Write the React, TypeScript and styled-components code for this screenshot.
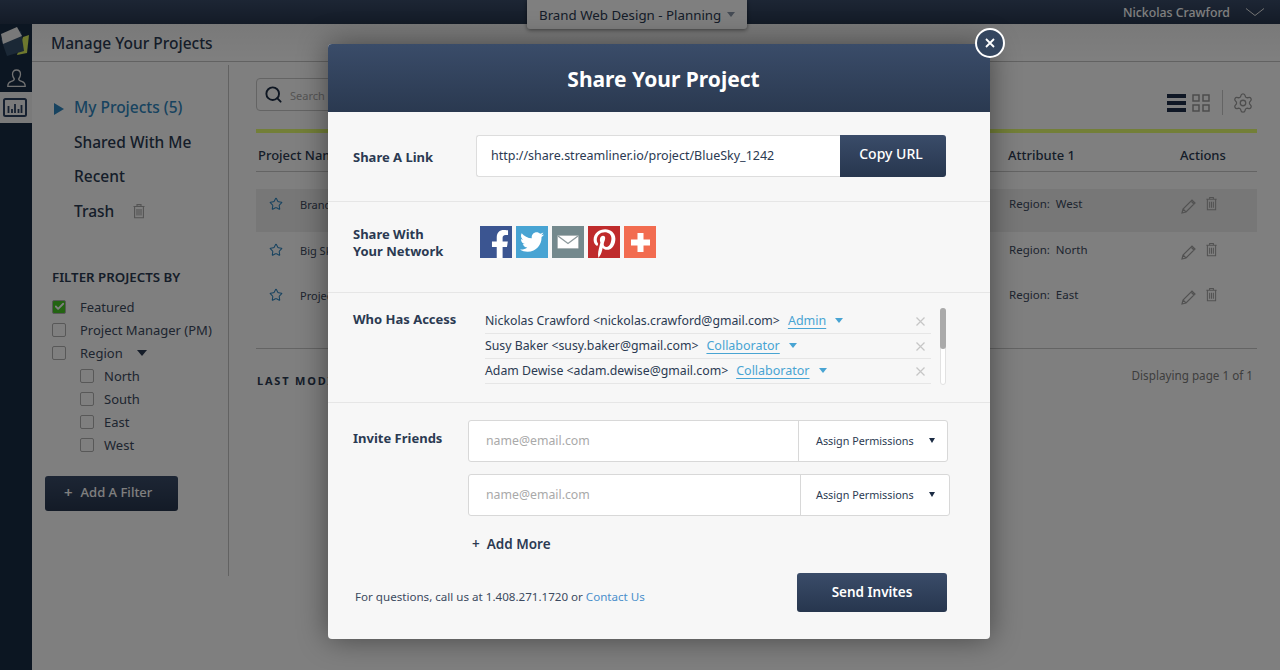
import React from "react";
import styled, { createGlobalStyle } from "styled-components";
import { FaFacebookF, FaTwitter, FaPinterestP } from "react-icons/fa";
import { Settings, Star, Search, Check } from "lucide-react";

const FONT = `"Noto Sans", "Open Sans", sans-serif`;

const GlobalStyle = createGlobalStyle`
  html, body { margin: 0; padding: 0; height: 100%; overflow: hidden; }
  body { background: #fff; font-family: ${FONT}; color: #2b3a52; }
  * { box-sizing: border-box; }
`;

const filters = ["North", "South", "East", "West"];
const rows = [
  { name: "Brand Web Design", region: "West", active: true },
  { name: "Big Sky Launch", region: "North", active: false },
  { name: "Project Bluebird", region: "East", active: false },
];
const people = [
  { who: "Nickolas Crawford <nickolas.crawford@gmail.com>", role: "Admin" },
  { who: "Susy Baker <susy.baker@gmail.com>", role: "Collaborator" },
  { who: "Adam Dewise <adam.dewise@gmail.com>", role: "Collaborator" },
];

const TrashIcon: React.FC<{ size?: number }> = ({ size = 16 }) => (
  <svg width={size} height={size} viewBox="0 0 16 16" fill="none" stroke="currentColor" strokeWidth="1.1">
    <path d="M2.5 3.5h11M6 3.3V1.6h4v1.7M3.6 3.7v11h8.8v-11" />
    <path d="M6 6v6.5M8 6v6.5M10 6v6.5" />
  </svg>
);

const App: React.FC = () => (
  <Page>
    <GlobalStyle />
    <TopBar>
      <ProjectPicker>
        Brand Web Design - Planning <PickerCaret />
      </ProjectPicker>
      <UserName>Nickolas Crawford</UserName>
      <svg width="20" height="10" viewBox="0 0 20 10" fill="none" stroke="#e8e8e8" strokeWidth="1">
        <path d="M1 1.5l9 7 9-7" />
      </svg>
    </TopBar>
    <Body>
      <Rail>
        <LogoSlot>
          <svg width="32" height="37" viewBox="0 0 32 37">
            <path d="M23 13l6-2-2 18-10 2z" fill="#dcf05c" />
            <path d="M1 15L21 7l3 20-17 5z" fill="#36506c" />
            <path d="M1 10l16-7 5 9-19 8z" fill="#f2f2f2" />
          </svg>
        </LogoSlot>
        <RailButton>
          <svg width="19" height="18" viewBox="0 0 19 18" fill="none" stroke="#e4e4e4" strokeWidth="1.3">
            <path d="M9.5 1c2.600 0 4 1.800 4 4.300 0 2.200-1 3.700-1.800 4.700 0 1.400 1 1.800 3 2.400 2 .7 3.500 1.400 3.500 4.900H.8c0-3.500 1.500-4.200 3.500-4.900 2-.6 3-1 3-2.400-.8-1-1.800-2.500-1.800-4.700 0-2.500 1.400-4.300 4-4.300z" />
          </svg>
        </RailButton>
        <RailButton $active>
          <svg width="24" height="19" viewBox="0 0 24 19" fill="none" stroke="#2b4160">
            <rect x="1" y="1" width="22" height="17" rx="1.500" strokeWidth="2" />
            <path d="M5.500 8v7M9 11v4M12 6v9M15.500 11v4M18.500 7v8" strokeWidth="1.800" />
          </svg>
        </RailButton>
      </Rail>
      <Main>
        <SubHeader>Manage Your Projects</SubHeader>
        <Columns>
          <Sidebar>
            <NavList>
              <NavItem $active>
                <NavCaret />
                My Projects (5)
              </NavItem>
              <NavItem>Shared With Me</NavItem>
              <NavItem>Recent</NavItem>
              <NavItem>
                Trash
                <NavTrash>
                  <TrashIcon size={16} />
                </NavTrash>
              </NavItem>
            </NavList>
            <FilterTitle>FILTER PROJECTS BY</FilterTitle>
            <FilterRow>
              <CheckBox $checked>
                <Check size={11} strokeWidth={4} color="#fff" />
              </CheckBox>
              Featured
            </FilterRow>
            <FilterRow>
              <CheckBox />
              Project Manager (PM)
            </FilterRow>
            <FilterRow>
              <CheckBox />
              Region
              <RegionCaret />
            </FilterRow>
            {filters.map((f) => (
              <FilterRow key={f} $nested>
                <CheckBox />
                {f}
              </FilterRow>
            ))}
            <AddFilter>
              <PlusMark>+</PlusMark> Add A Filter
            </AddFilter>
          </Sidebar>
          <Content>
            <Toolbar>
              <SearchBox>
                <Search size={19} color="#1c2c44" strokeWidth={2.4} />
                <SearchHint>Search</SearchHint>
              </SearchBox>
              <ToolIcons>
                <svg width="19" height="18" viewBox="0 0 19 18" fill="#1f2f4a">
                  <path d="M0 0h19v4H0zM0 7h19v4H0zM0 14h19v4H0z" />
                </svg>
                <svg width="18" height="18" viewBox="0 0 18 18" fill="none" stroke="#9a9a9a" strokeWidth="1.500">
                  <path d="M1 1h6v6H1zM11 1h6v6h-6zM1 11h6v6H1zM11 11h6v6h-6z" />
                </svg>
                <ToolDivider />
                <Settings size={22} color="#9c9c9c" strokeWidth={1.4} />
              </ToolIcons>
            </Toolbar>
            <TableHead>
              <HeadCell>Project Name</HeadCell>
              <HeadCell />
              <HeadCell>Attribute 1</HeadCell>
              <HeadCell>Actions</HeadCell>
            </TableHead>
            {rows.map((r) => (
              <TableRow key={r.name} $active={r.active}>
                <NameCell>
                  <Star size={14} color="#2f86c0" strokeWidth={1.8} />
                  <span>{r.name}</span>
                </NameCell>
                <span />
                <RegionCell>Region:&nbsp; {r.region}</RegionCell>
                <ActionCell>
                  <PencilSlot>
                    <svg width="15" height="15" viewBox="0 0 15 15" fill="none" stroke="currentColor" strokeWidth="1.200">
                      <path d="M1 14l1-4L11 1l3 3-9 9zM2 10l3 3M10 2l3 3" />
                    </svg>
                  </PencilSlot>
                  <TrashIcon size={15} />
                </ActionCell>
              </TableRow>
            ))}
            <TableFoot>
              <LastMod>LAST MODIFIED</LastMod>
              <Paging>Displaying page 1 of 1</Paging>
            </TableFoot>
          </Content>
        </Columns>
      </Main>
    </Body>
    <Overlay />
    <Modal>
      <CloseButton>
        <svg width="10" height="10" viewBox="0 0 10 10" stroke="#fff" strokeWidth="1.800">
          <path d="M1 1l8 8M9 1L1 9" />
        </svg>
      </CloseButton>
      <ModalHeader>Share Your Project</ModalHeader>
      <LinkSection>
        <SectionLabel>Share A Link</SectionLabel>
        <UrlField>http://share.streamliner.io/project/BlueSky_1242</UrlField>
        <CopyButton>Copy URL</CopyButton>
      </LinkSection>
      <NetworkSection>
        <SectionLabel>
          Share With
          <br />
          Your Network
        </SectionLabel>
        <SocialRow>
          <SocialTile $bg="#3b5591">
            <FacebookGlyph />
          </SocialTile>
          <SocialTile $bg="#48a4d3">
            <FaTwitter size={24} />
          </SocialTile>
          <SocialTile $bg="#74898d">
            <svg width="22" height="14" viewBox="0 0 22 14">
              <rect x="0.500" y="0.500" width="21" height="13" rx="1" fill="#fff" stroke="#a9b3b5" />
              <path d="M1 1l10 7.500L21 1" fill="none" stroke="#8d9a9d" strokeWidth="1.300" />
            </svg>
          </SocialTile>
          <SocialTile $bg="#bf2b2c">
            <PinterestGlyph />
          </SocialTile>
          <SocialTile $bg="#f26c50">
            <svg width="19" height="19" viewBox="0 0 19 19" fill="#fff">
              <path d="M6.500 0h6v6.500H19v6h-6.500V19h-6v-6.500H0v-6h6.500z" />
            </svg>
          </SocialTile>
        </SocialRow>
      </NetworkSection>
      <AccessSection>
        <SectionLabel>Who Has Access</SectionLabel>
        <AccessList>
          {people.map((p) => (
            <AccessRow key={p.who}>
              <span>{p.who}</span>
              <RoleLink>{p.role}</RoleLink>
              <RoleCaret />
              <RemoveX>
                <svg width="9" height="9" viewBox="0 0 9 9" stroke="#c6c6c6" strokeWidth="1.200">
                  <path d="M0.500 0.500l8 8M8.500 0.500l-8 8" />
                </svg>
              </RemoveX>
            </AccessRow>
          ))}
        </AccessList>
        <ScrollTrack>
          <ScrollThumb />
        </ScrollTrack>
      </AccessSection>
      <InviteSection>
        <InviteTop>
          <SectionLabel>Invite Friends</SectionLabel>
          <InviteFields>
            <InviteField $width={480}>
              <EmailHint>name@email.com</EmailHint>
              <PermissionSelect $indent={17} $end={12}>
                Assign Permissions <DarkCaret />
              </PermissionSelect>
            </InviteField>
            <InviteField $width={482}>
              <EmailHint>name@email.com</EmailHint>
              <PermissionSelect $indent={15} $end={14}>
                Assign Permissions <DarkCaret />
              </PermissionSelect>
            </InviteField>
            <AddMore>
              <span>+</span> Add More
            </AddMore>
          </InviteFields>
        </InviteTop>
        <ModalFoot>
          <FootNote>
            For questions, call us at 1.408.271.1720 or <FootLink>Contact Us</FootLink>
          </FootNote>
          <SendButton>Send Invites</SendButton>
        </ModalFoot>
      </InviteSection>
    </Modal>
  </Page>
);

const FacebookGlyph = styled(FaFacebookF)`
  width: 30px;
  height: 30px;
  margin: 6px -8px 0 0;
`;
const PinterestGlyph = styled(FaPinterestP)`
  width: 27px;
  height: 29px;
  margin-top: 3px;
`;

export default App;

const Page = styled.div`
  position: relative;
  width: 1280px;
  height: 670px;
  overflow: hidden;
  background: #fff;
`;
const TopBar = styled.header`
  position: relative;
  display: flex;
  align-items: center;
  justify-content: flex-end;
  gap: 15px;
  height: 24px;
  padding-right: 15px;
  background: linear-gradient(#3a4c69, #27364e);
`;
const ProjectPicker = styled.div`
  position: absolute;
  top: 0;
  left: 527px;
  z-index: 2;
  display: flex;
  align-items: center;
  gap: 6px;
  width: 220px;
  height: 29px;
  padding: 0 0 0 12px;
  background: #fff;
  border-radius: 0 0 3px 3px;
  box-shadow: 0 1px 4px rgba(0, 0, 0, 0.5);
  font-size: 13.300px;
  color: #2b3a52;
`;
const PickerCaret = styled.i`
  border: 4px solid transparent;
  border-top: 5px solid #8a96a8;
  border-bottom: 0;
`;
const UserName = styled.div`
  font-size: 12.300px;
  font-weight: 500;
  color: #fff;
`;
const Body = styled.div`
  display: flex;
  height: 646px;
`;
const Rail = styled.nav`
  display: flex;
  flex-direction: column;
  width: 32px;
  background: #182c44;
`;
const LogoSlot = styled.div`
  height: 37px;
  overflow: hidden;
`;
const RailButton = styled.div<{ $active?: boolean }>`
  display: flex;
  align-items: center;
  justify-content: ${(p) => (p.$active ? "flex-start" : "center")};
  flex: none;
  width: ${(p) => (p.$active ? "34px" : "32px")};
  height: 31px;
  padding: ${(p) => (p.$active ? "0 0 0 3px" : "3px 0 0")};
  background: ${(p) => (p.$active ? "#f4f4f4" : "transparent")};
  border-radius: 0 2px 2px 0;
`;
const Main = styled.main`
  flex: 1;
  display: flex;
  flex-direction: column;
`;
const SubHeader = styled.div`
  display: flex;
  align-items: center;
  height: 38px;
  padding: 0 0 0 19px;
  background: linear-gradient(#f3f3f3, #fff);
  border-bottom: 1px solid #c4c4c4;
  font-size: 15.500px;
  font-weight: 500;
  color: #2b3a52;
`;
const Columns = styled.div`
  display: flex;
  flex: 1;
  background: #fff;
`;
const Sidebar = styled.aside`
  width: 197px;
  height: 511px;
  margin-top: 3px;
  border-right: 1px solid #c4c4c4;
  padding: 25px 0 0 20px;
`;
const NavList = styled.ul`
  list-style: none;
  margin: 0 0 40px;
  padding: 0;
`;
const NavItem = styled.li<{ $active?: boolean }>`
  position: relative;
  display: flex;
  align-items: center;
  height: 34.500px;
  padding-left: 22px;
  font-size: 15.500px;
  font-weight: 500;
  color: ${(p) => (p.$active ? "#2f86c0" : "#2b3a52")};
`;
const NavCaret = styled.i`
  position: absolute;
  left: 2px;
  top: 13px;
  border: 6px solid transparent;
  border-left: 10px solid #2f86c0;
  border-right: 0;
`;
const NavTrash = styled.span`
  display: inline-flex;
  margin-left: 17px;
  color: #a8a8a8;
`;
const FilterTitle = styled.h3`
  margin: 0 0 9px;
  font-size: 13.300px;
  font-weight: 600;
  color: #2b3a52;
`;
const FilterRow = styled.div<{ $nested?: boolean }>`
  display: flex;
  align-items: center;
  gap: ${(p) => (p.$nested ? "10px" : "14px")};
  height: 23px;
  padding-left: ${(p) => (p.$nested ? "28px" : "0")};
  font-size: 13px;
  color: #3c4a60;
`;
const CheckBox = styled.span<{ $checked?: boolean }>`
  display: inline-flex;
  align-items: center;
  justify-content: center;
  flex: none;
  width: 14px;
  height: 14px;
  border: 1px solid #b0b0b0;
  border-radius: 2px;
  background: ${(p) => (p.$checked ? "#46c825" : "#fff")};
`;
const RegionCaret = styled.i`
  border: 5px solid transparent;
  border-top: 6px solid #2b3a52;
  border-bottom: 0;
`;
const AddFilter = styled.button`
  display: flex;
  align-items: center;
  gap: 8px;
  width: 133px;
  height: 35px;
  margin: 20px 0 0 -7px;
  padding: 0 0 3px 19px;
  border: 0;
  border-radius: 3px;
  background: linear-gradient(#3a4c69, #27364e);
  color: #fff;
  font-family: ${FONT};
  font-size: 13px;
  font-weight: 500;
`;
const PlusMark = styled.span`
  font-size: 15px;
  font-weight: 600;
`;
const Content = styled.section`
  flex: 1;
  padding: 17px 23px 0 27px;
`;
const Toolbar = styled.div`
  display: flex;
  align-items: flex-end;
  justify-content: space-between;
  height: 54px;
  padding-bottom: 18px;
  border-bottom: 4px solid #e6ff70;
`;
const SearchBox = styled.div`
  display: flex;
  align-items: center;
  gap: 7px;
  width: 300px;
  height: 33px;
  padding-left: 7px;
  border: 1px solid #c8c8c8;
  border-radius: 4px;
`;
const SearchHint = styled.span`
  padding-top: 1px;
  font-size: 11px;
  color: #aaa;
`;
const ToolIcons = styled.div`
  display: flex;
  align-items: center;
  gap: 6px;
  margin: 0 3px -4px 0;
`;
const ToolDivider = styled.i`
  width: 1px;
  height: 25px;
  margin: 0 3px 0 6px;
  background: #c8c8c8;
`;
const TableHead = styled.div`
  display: grid;
  grid-template-columns: 400px 350px 172px 1fr;
  align-items: center;
  height: 39px;
  padding: 5px 0 0 2px;
  border-bottom: 1px solid #c8c8c8;
`;
const HeadCell = styled.div`
  font-size: 13px;
  font-weight: 500;
  color: #2b3a52;
`;
const TableRow = styled.div<{ $active?: boolean }>`
  display: grid;
  grid-template-columns: 402px 351px 171px 1fr;
  height: 43px;
  margin-top: ${(p) => (p.$active ? "17px" : "2.500px")};
  padding-top: 7px;
  background: ${(p) => (p.$active ? "#eee" : "transparent")};
`;
const NameCell = styled.div`
  display: flex;
  align-items: flex-start;
  gap: 17px;
  padding: 1px 0 0 13px;
  font-size: 11px;
  color: #3c4a60;
`;
const RegionCell = styled.div`
  font-size: 11.500px;
  color: #3c4a60;
`;
const ActionCell = styled.div`
  display: flex;
  gap: 8px;
  padding-left: 1px;
  color: #a4a4a4;
`;
const PencilSlot = styled.span`
  display: flex;
  margin-top: 3px;
`;
const TableFoot = styled.div`
  display: flex;
  justify-content: space-between;
  margin-top: 25px;
  padding: 18px 4px 0 1px;
  border-top: 1px solid #c8c8c8;
`;
const LastMod = styled.span`
  margin-top: 6px;
  font-size: 11px;
  font-weight: 700;
  letter-spacing: 1.800px;
  color: #2b3a52;
`;
const Paging = styled.span`
  font-size: 11.700px;
  color: #7d7d7d;
`;
const Overlay = styled.div`
  position: absolute;
  inset: 0;
  z-index: 5;
  background: rgba(0, 0, 0, 0.5);
`;
const Modal = styled.div`
  position: absolute;
  top: 44px;
  left: 328px;
  z-index: 6;
  display: flex;
  flex-direction: column;
  width: 662px;
  height: 595px;
  background: #f7f7f7;
  border-radius: 4px;
  box-shadow: 0 0 30px rgba(0, 0, 0, 0.45);
`;
const CloseButton = styled.div`
  position: absolute;
  top: -16px;
  right: -15px;
  display: flex;
  align-items: center;
  justify-content: center;
  width: 30px;
  height: 30px;
  border: 2px solid #fff;
  border-radius: 50%;
  background: #34465f;
`;
const ModalHeader = styled.h1`
  display: flex;
  align-items: center;
  justify-content: center;
  height: 68px;
  margin: 0;
  padding: 2px 0 0 9px;
  border-radius: 4px 4px 0 0;
  background: linear-gradient(#3a4c69, #2a3950);
  font-size: 21px;
  font-weight: 700;
  color: #fff;
`;
const SectionLabel = styled.div`
  font-size: 13px;
  font-weight: 700;
  line-height: 17px;
  color: #2b3a52;
`;
const LinkSection = styled.section`
  display: flex;
  align-items: center;
  height: 90px;
  padding: 0 0 1px 25px;
  border-bottom: 1px solid #e6e6e6;
  ${SectionLabel} {
    width: 123px;
    padding-top: 2px;
  }
`;
const UrlField = styled.div`
  display: flex;
  align-items: center;
  width: 364px;
  height: 42px;
  padding: 0 0 1px 14px;
  background: #fff;
  border: 1px solid #ddd;
  border-right: 0;
  border-radius: 3px 0 0 3px;
  font-size: 12.500px;
  color: #2b3a52;
`;
const CopyButton = styled.button`
  width: 106px;
  height: 42px;
  padding: 0 4px 5px 0;
  border: 0;
  border-radius: 0 3px 3px 0;
  background: linear-gradient(#3a4c69, #27364e);
  color: #fff;
  font-family: ${FONT};
  font-size: 14px;
  font-weight: 500;
`;
const NetworkSection = styled.section`
  display: flex;
  height: 91px;
  padding: 24px 0 0 25px;
  border-bottom: 1px solid #e6e6e6;
  ${SectionLabel} {
    width: 127px;
  }
`;
const SocialRow = styled.div`
  display: flex;
  gap: 4px;
`;
const SocialTile = styled.div<{ $bg: string }>`
  display: flex;
  align-items: center;
  justify-content: center;
  overflow: hidden;
  width: 32px;
  height: 32px;
  background: ${(p) => p.$bg};
  color: #fff;
`;
const AccessSection = styled.section`
  position: relative;
  display: flex;
  height: 110px;
  padding: 18px 0 0 25px;
  border-bottom: 1px solid #e6e6e6;
  ${SectionLabel} {
    width: 132px;
  }
`;
const AccessList = styled.div`
  width: 446px;
  margin-top: -2px;
`;
const AccessRow = styled.div`
  position: relative;
  display: flex;
  align-items: center;
  gap: 8px;
  height: 25px;
  padding-bottom: 2px;
  border-bottom: 1px solid #e6e6e6;
  font-size: 12.300px;
  color: #2b3a52;
`;
const RoleLink = styled.span`
  color: #48a4d3;
  font-size: 12.500px;
  text-decoration: underline;
  text-underline-offset: 3px;
`;
const RoleCaret = styled.i`
  margin-left: 1px;
  border: 4px solid transparent;
  border-top: 5px solid #48a4d3;
  border-bottom: 0;
`;
const RemoveX = styled.span`
  position: absolute;
  right: 6px;
  top: 8px;
  display: flex;
`;
const ScrollTrack = styled.div`
  position: absolute;
  top: 15px;
  left: 612px;
  width: 6px;
  height: 77px;
  border: 1px solid #e2e2e2;
  border-radius: 3px;
  background: #fff;
`;
const ScrollThumb = styled.div`
  width: 6px;
  height: 41px;
  margin: -1px 0 0 -1px;
  border-radius: 3px;
  background: #aaa;
`;
const InviteSection = styled.section`
  flex: 1;
  padding: 17px 43px 0 25px;
`;
const InviteTop = styled.div`
  display: flex;
  ${SectionLabel} {
    width: 115px;
    flex: none;
    padding-top: 10px;
  }
`;
const InviteFields = styled.div`
  display: flex;
  flex-direction: column;
  gap: 12px;
`;
const InviteField = styled.div<{ $width: number }>`
  display: flex;
  align-items: center;
  width: ${(p) => p.$width}px;
  height: 42px;
  background: #fff;
  border: 1px solid #d8d8d8;
  border-radius: 3px;
`;
const EmailHint = styled.span`
  flex: 1;
  padding: 0 0 2px 17px;
  font-size: 12.300px;
  color: #a9a9a9;
`;
const PermissionSelect = styled.div<{ $indent: number; $end: number }>`
  display: flex;
  align-items: center;
  justify-content: space-between;
  flex: none;
  width: 149px;
  height: 100%;
  padding: 0 ${(p) => p.$end}px 2px ${(p) => p.$indent}px;
  border-left: 1px solid #d8d8d8;
  font-size: 10.800px;
  color: #2b3a52;
`;
const DarkCaret = styled.i`
  border: 3.500px solid transparent;
  border-top: 5px solid #1c2c44;
  border-bottom: 0;
`;
const AddMore = styled.div`
  display: flex;
  gap: 7px;
  margin: 7px 0 0 4px;
  font-size: 13.500px;
  font-weight: 600;
  color: #2b3a52;
`;
const ModalFoot = styled.div`
  display: flex;
  align-items: center;
  justify-content: space-between;
  margin: 20px 0 0 2px;
`;
const FootNote = styled.div`
  padding-top: 8px;
  font-size: 11.600px;
  color: #3c4a60;
`;
const FootLink = styled.span`
  color: #4a8fcb;
`;
const SendButton = styled.button`
  width: 150px;
  height: 39px;
  padding-bottom: 2px;
  border: 0;
  border-radius: 3px;
  background: linear-gradient(#3a4c69, #27364e);
  color: #fff;
  font-family: ${FONT};
  font-size: 13.500px;
  font-weight: 600;
`;
